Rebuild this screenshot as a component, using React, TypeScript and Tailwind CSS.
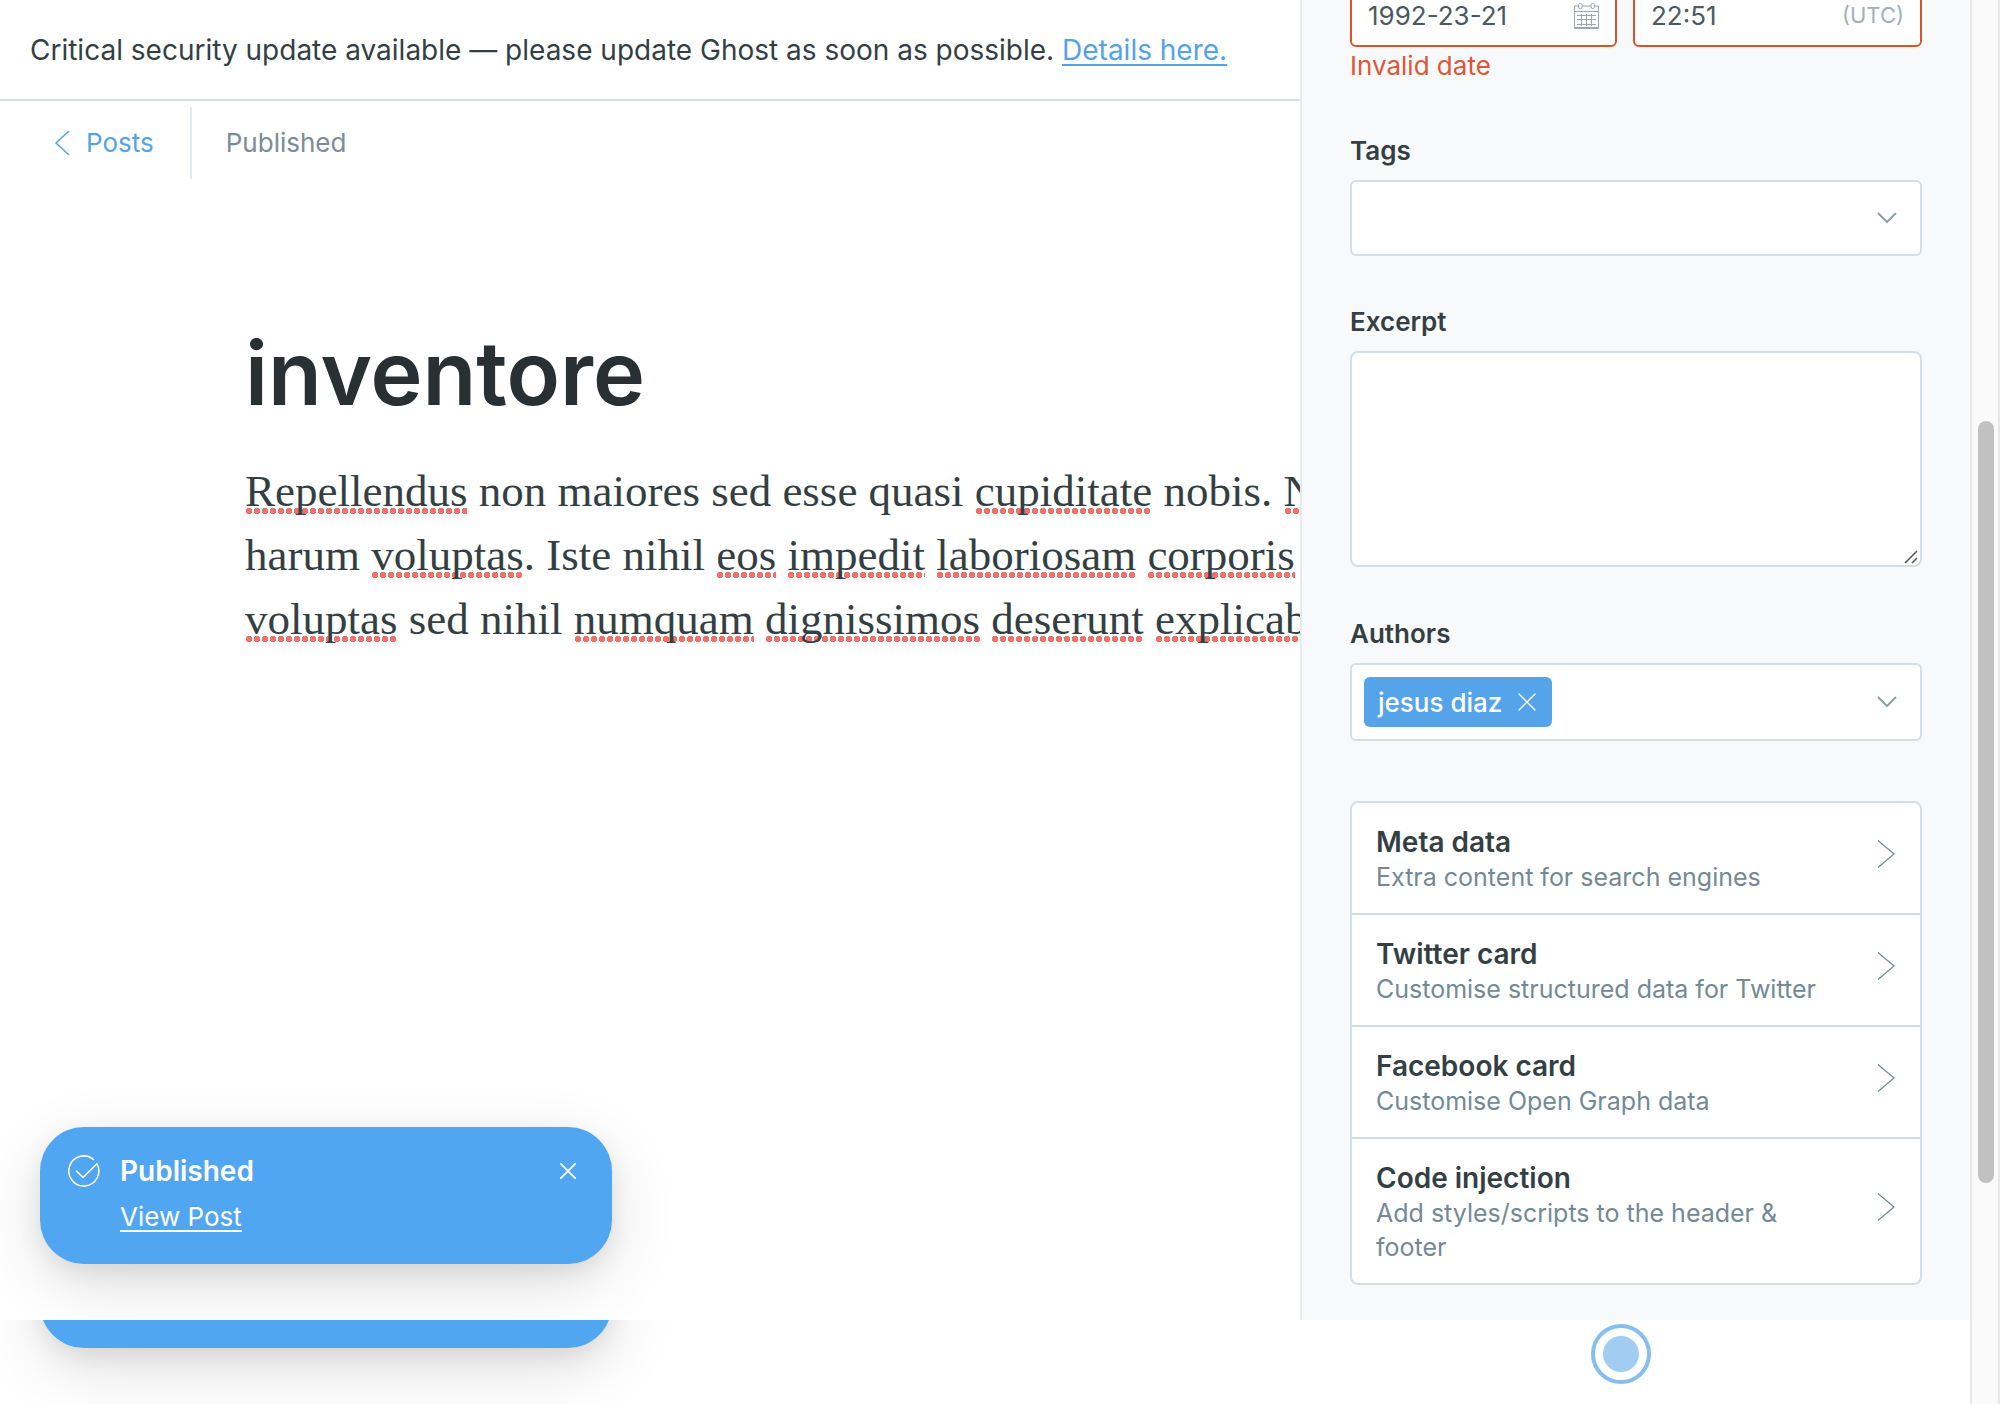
import type { ReactNode } from "react";

const cards = [
  { title: "Meta data", text: "Extra content for search engines" },
  { title: "Twitter card", text: "Customise structured data for Twitter" },
  { title: "Facebook card", text: "Customise Open Graph data" },
  { title: "Code injection", text: "Add styles/scripts to the header & footer" },
];

function Misspelt({ children }: { children: ReactNode }) {
  return (
    <span className="bg-[radial-gradient(circle,#f0716a_2px,#f0716a_3px,transparent_3px)] bg-[length:8px_6px] bg-[position:0_calc(100%-2px)] bg-repeat-x">
      {children}
    </span>
  );
}

function Chevron() {
  return (
    <svg width="20" height="12" viewBox="0 0 20 12" fill="none" stroke="#8fa1ab" strokeWidth="2" aria-hidden="true">
      <path d="M1 1l9 9 9-9" />
    </svg>
  );
}

function Cross({ size, stroke }: { size: number; stroke: number }) {
  return (
    <svg width={size} height={size} viewBox="0 0 18 18" fill="none" stroke="currentColor" strokeWidth={stroke} strokeLinecap="round" aria-hidden="true">
      <path d="M1 1l16 16M17 1L1 17" />
    </svg>
  );
}

function CalendarIcon() {
  return (
    <svg width="25" height="26" viewBox="0 0 25 26" fill="none" stroke="#9aa9b1" strokeWidth="1" aria-hidden="true">
      <path d="M4.500 3H.5v22.500h24V3h-4M8 3h9M.5 8.500h24M.5 24.500h24" />
      <rect x="4.500" y=".5" width="3.500" height="5" rx="1.500" />
      <rect x="17" y=".5" width="3.500" height="5" rx="1.500" />
      <path d="M3 12.500h19M3 16.500h19M3 21.500h19M7.500 11v12M12.500 11v12M17.500 11v12" />
    </svg>
  );
}

function Banner() {
  return (
    <div className="border-b-2 border-[#dadede] px-[30px] pt-[30px] pb-[29px] text-[28px] leading-10 whitespace-nowrap text-[#343f44]">
      Critical security update available — please update Ghost as soon as possible.{" "}
      <a href="#details" className="text-[#54a3e8] underline decoration-2 underline-offset-4">
        Details here.
      </a>
    </div>
  );
}

function EditorHeader() {
  return (
    <header className="flex items-center pt-1.5 text-[26px] leading-[72px]">
      <a href="#posts" className="flex h-[72px] items-center gap-4 border-r-2 border-[#e3eaef] pr-9 pl-[54px] text-[#54a3e8]">
        <svg width="16" height="26" viewBox="0 0 16 26" fill="none" stroke="currentColor" strokeWidth="1.500" aria-hidden="true">
          <path d="M15 1L2 13l13 12" />
        </svg>
        Posts
      </a>
      <span className="pl-[34px] text-[#7c8b9a]">Published</span>
    </header>
  );
}

function Article() {
  return (
    <article className="pt-[136px] pl-[245px]">
      <h1 className="text-[88px] leading-[116px] font-semibold text-[#283033]">inventore</h1>
      <p className="pt-[28px] font-['Liberation_Serif',serif] text-[45px] leading-[64px] whitespace-nowrap text-[#343f44]">
        <Misspelt>Repellendus</Misspelt> non maiores sed esse quasi <Misspelt>cupiditate</Misspelt> nobis. <Misspelt>N</Misspelt>
        <br />
        harum <Misspelt>voluptas</Misspelt>. Iste nihil <Misspelt>eos</Misspelt> <Misspelt>impedit</Misspelt>{" "}
        <Misspelt>laboriosam</Misspelt> <Misspelt>corporis</Misspelt>
        <br />
        <Misspelt>voluptas</Misspelt> sed nihil <Misspelt>numquam</Misspelt> <Misspelt>dignissimos</Misspelt>{" "}
        <Misspelt>deserunt</Misspelt> <Misspelt>explicab</Misspelt>
      </p>
    </article>
  );
}

function Toast({ children }: { children?: ReactNode }) {
  return (
    <div className="absolute bottom-14 left-10 flex h-[137px] w-[572px] items-start gap-5 rounded-[44px] bg-[#51a6f2] px-7 py-6 text-white shadow-[0_8px_24px_rgba(0,0,0,0.08),0_20px_70px_-4px_rgba(0,0,0,0.14)]">
      {children}
    </div>
  );
}

function PublishedToast() {
  return (
    <Toast>
      <svg className="mt-1" width="32" height="32" viewBox="0 0 32 32" fill="none" stroke="currentColor" strokeWidth="1.500" strokeLinecap="round" strokeLinejoin="round" aria-hidden="true">
        <path d="M25.500 4.500A15 15 0 1 0 29 8.800M8.500 16l6.500 6.500L29 8.800" />
      </svg>
      <div className="flex-1">
        <p className="text-[28px] leading-10 font-semibold">Published</p>
        <a href="#view" className="text-[26px] leading-[52px] underline decoration-2 underline-offset-4">
          View Post
        </a>
      </div>
      <button type="button" aria-label="Close" className="mt-3 mr-2">
        <Cross size={16} stroke={2} />
      </button>
    </Toast>
  );
}

function Settings() {
  return (
    <aside className="w-[670px] shrink-0 overflow-hidden border-l-2 border-[#e3ebf1] bg-[#f8f9fb] px-12 text-[#343f44]">
      <div className="-mt-4 flex gap-4 text-[26px] text-[#4b5960]">
        <div className="flex h-[63px] w-[267px] items-center justify-between rounded-md border-2 border-[#d9532f] bg-white px-4">
          <input aria-label="Publish date" defaultValue="1992-23-21" className="w-[180px] outline-none" />
          <CalendarIcon />
        </div>
        <div className="flex h-[63px] min-w-0 flex-1 items-center justify-between rounded-md border-2 border-[#d9532f] bg-white px-4">
          <input aria-label="Publish time" defaultValue="22:51" className="w-[120px] outline-none" />
          <span className="text-[22px] text-[#a3b0b8]">(UTC)</span>
        </div>
      </div>
      <p className="text-[26px] leading-[38px] text-[#dd5638]">Invalid date</p>

      <label htmlFor="tags" className="mt-[46px] block pb-[9px] text-[26px] leading-10 font-semibold">
        Tags
      </label>
      <div className="flex h-[76px] items-center rounded-md border-2 border-[#d3dee7] bg-white pr-[23px]">
        <input id="tags" className="h-full min-w-0 flex-1 px-4 text-[26px] outline-none" />
        <Chevron />
      </div>

      <label htmlFor="excerpt" className="mt-[46px] block pb-[9px] text-[26px] leading-10 font-semibold">
        Excerpt
      </label>
      <div className="relative">
        <textarea id="excerpt" className="block h-[216px] w-full resize-none rounded-lg border-2 border-[#d3dee7] bg-white p-4 text-[26px] outline-none" />
        <svg className="pointer-events-none absolute right-1 bottom-[3px]" width="14" height="14" viewBox="0 0 14 14" stroke="#555" strokeWidth="1.500" aria-hidden="true">
          <path d="M1 13L13 1M8 13l5-5" />
        </svg>
      </div>

      <label htmlFor="authors" className="mt-[47px] block pb-[9px] text-[26px] leading-10 font-semibold">
        Authors
      </label>
      <div className="flex h-[78px] items-center rounded-md border-2 border-[#d3dee7] bg-white pr-[23px] pl-3">
        <span className="flex h-[50px] items-center gap-4 rounded-md bg-[#55a3e8] pr-4 pl-3.5 text-[26px] font-medium text-white">
          jesus diaz
          <button type="button" aria-label="Remove jesus diaz">
            <Cross size={18} stroke={1.25} />
          </button>
        </span>
        <input id="authors" className="h-full min-w-0 flex-1 px-4 text-[26px] outline-none" />
        <Chevron />
      </div>

      <ul className="mt-[60px] divide-y-2 divide-[#d3dee7] overflow-hidden rounded-lg border-2 border-[#d3dee7] bg-white">
        {cards.map((card) => (
          <li key={card.title}>
            <button type="button" className="flex w-full items-center pt-[21px] pr-[25px] pb-[19px] pl-6 text-left">
              <span className="flex-1 pr-14">
                <span className="block text-[28px] leading-9 font-semibold">{card.title}</span>
                <span className="block text-[25px] leading-[34px] text-[#738a94]">{card.text}</span>
              </span>
              <svg className="mb-2.5 shrink-0" width="18" height="28" viewBox="0 0 18 28" fill="none" stroke="#738a94" strokeWidth="1.250" aria-hidden="true">
                <path d="M1 .5L17 14 1 27.500" />
              </svg>
            </button>
          </li>
        ))}
      </ul>
    </aside>
  );
}

export default function App() {
  return (
    <div className="flex h-screen overflow-hidden bg-white font-['Inter',sans-serif]">
      <div className="flex min-w-0 flex-1 flex-col">
        <div className="flex min-h-0 flex-1">
          <main className="relative min-w-0 flex-1 overflow-hidden">
            <Banner />
            <EditorHeader />
            <Article />
            <PublishedToast />
          </main>
          <Settings />
        </div>
        <div className="relative flex h-[84px] shrink-0 justify-end overflow-hidden pt-1 pr-[319px]">
          <Toast />
          <div className="flex size-[60px] items-center justify-center rounded-full border-4 border-[#86bfef]">
            <div className="size-9 rounded-full bg-[#a2cdf2]" />
          </div>
        </div>
      </div>
      <div className="flex w-[30px] shrink-0 flex-col items-center border-x-2 border-[#e8e8e8] bg-[#fafafa] pt-[421px] pl-0.5">
        <div className="h-[762px] w-4 rounded-full bg-[#c1c1c1]" />
      </div>
    </div>
  );
}
